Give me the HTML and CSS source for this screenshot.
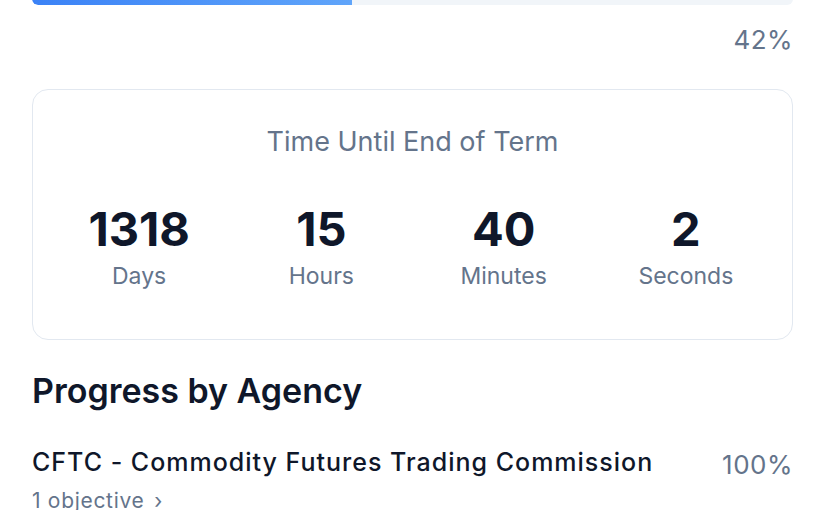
FILE: index.html
```html
<!DOCTYPE html>
<html lang="en">

<head>
    <meta charset="UTF-8">
    <meta name="viewport" content="width=device-width, initial-scale=1.0">
    <title>Term Progress</title>
    <link rel="stylesheet" href="styles.css">
</head>

<body>
    <div class="page">
        <div class="term-progress">
            <div class="bar">
                <div class="bar-fill" style="width: 42%"></div>
            </div>
            <div class="bar-label">42%</div>
        </div>

        <div class="countdown">
            <h2>Time Until End of Term</h2>
            <div class="countdown-grid">
                <div class="unit">
                    <span class="value">1318</span>
                    <span class="label">Days</span>
                </div>
                <div class="unit">
                    <span class="value">15</span>
                    <span class="label">Hours</span>
                </div>
                <div class="unit">
                    <span class="value">40</span>
                    <span class="label">Minutes</span>
                </div>
                <div class="unit">
                    <span class="value">2</span>
                    <span class="label">Seconds</span>
                </div>
            </div>
        </div>

        <h1 class="section-title">Progress by Agency</h1>

        <div class="agency">
            <div class="agency-info">
                <div class="agency-name">CFTC - Commodity Futures Trading Commission</div>
                <a class="agency-link" href="#">1 objective <span class="chev">&rsaquo;</span></a>
            </div>
            <div class="agency-pct">100%</div>
        </div>
    </div>
</body>

</html>
```

FILE: styles.css
```css
body {
    font-family: 'Inter', 'Roboto', sans-serif;
    background-color: #ffffff;
    margin: 0;
    padding: 0;
    color: #0f172a;
    line-height: 1.2;
}

.page {
    padding: 0 32px;
    margin-top: -7px;
}

.bar {
    height: 12px;
    background-color: #f1f5f9;
    border-radius: 6px;
    overflow: hidden;
}

.bar-fill {
    height: 100%;
    background: linear-gradient(90deg, #3b82f6, #60a5fa);
    border-radius: 6px 0 0 6px;
}

.bar-label {
    text-align: right;
    font-size: 26px;
    letter-spacing: 0.4px;
    color: #64748b;
    margin-top: 19px;
}

.countdown {
    margin-top: 34px;
    border: 1.5px solid #e2e8f0;
    border-radius: 16px;
    padding: 36px 15px 48px;
    text-align: center;
}

.countdown h2 {
    margin: 0;
    font-size: 27px;
    font-weight: 400;
    color: #64748b;
}

.countdown-grid {
    display: grid;
    grid-template-columns: repeat(4, 1fr);
    margin-top: 42px;
}

.unit {
    display: flex;
    flex-direction: column;
    align-items: center;
}

.value {
    font-size: 47px;
    font-weight: 700;
    color: #0f172a;
}

.label {
    font-size: 23px;
    color: #64748b;
    margin-top: 6px;
}

.section-title {
    font-size: 34px;
    font-weight: 600;
    margin: 31px 0 0;
}

.agency {
    display: flex;
    justify-content: space-between;
    align-items: flex-start;
    margin-top: 36px;
}

.agency-name {
    font-size: 25px;
    font-weight: 500;
    letter-spacing: 1px;
}

.agency-link {
    display: inline-block;
    margin-top: 11px;
    font-size: 21px;
    letter-spacing: 0.7px;
    color: #64748b;
    text-decoration: none;
}

.chev {
    margin-left: 3px;
}

.agency-pct {
    font-size: 26px;
    letter-spacing: 0.5px;
    color: #64748b;
    margin-top: 2px;
}
```
